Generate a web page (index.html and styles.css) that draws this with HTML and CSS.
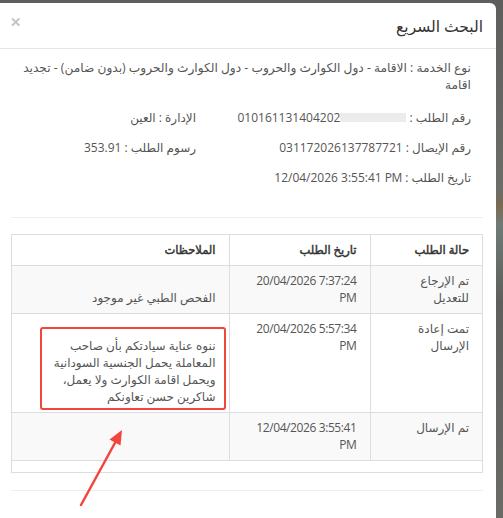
FILE: index.html
```html
<!DOCTYPE html>
<html lang="ar">

<head>
    <meta charset="UTF-8">
    <meta name="viewport" content="width=device-width, initial-scale=1.0">
    <title>البحث السريع</title>
    <link rel="stylesheet" href="styles.css">
</head>

<body>

    <div class="modal" dir="rtl">
        <div class="modal-header">
            <h4 class="modal-title">البحث السريع</h4>
            <span class="close">&times;</span>
        </div>

        <div class="modal-body">
            <!-- Request details -->
            <div class="info">
                <p class="service">نوع الخدمة : الاقامة - دول الكوارث والحروب - دول الكوارث والحروب (بدون ضامن) - تجديد<br>اقامة</p>
                <div class="info-grid">
                    <div>رقم الطلب : <span class="masked"></span><span class="num" dir="ltr">010161131404202</span></div>
                    <div>الإدارة : العين</div>
                    <div>رقم الإيصال : <span class="num" dir="ltr">031172026137787721</span></div>
                    <div>رسوم الطلب : <span class="num" dir="ltr">353.91</span></div>
                    <div>تاريخ الطلب : <span class="num" dir="ltr">12/04/2026 3:55:41 PM</span></div>
                </div>
            </div>

            <hr class="divider">

            <!-- Status history -->
            <div class="table-box">
                <table class="history">
                    <colgroup>
                        <col class="col-status">
                        <col class="col-date">
                        <col>
                    </colgroup>
                    <thead>
                        <tr>
                            <th>حالة الطلب</th>
                            <th>تاريخ الطلب</th>
                            <th>الملاحظات</th>
                        </tr>
                    </thead>
                    <tbody>
                        <tr class="striped">
                            <td>تم الإرجاع<br>للتعديل</td>
                            <td class="date" dir="ltr">20/04/2026 7:37:24<br>PM</td>
                            <td><br>الفحص الطبي غير موجود</td>
                        </tr>
                        <tr>
                            <td>تمت إعادة<br>الإرسال</td>
                            <td class="date" dir="ltr">20/04/2026 5:57:34<br>PM</td>
                            <td><br>ننوه عناية سيادتكم بأن صاحب<br>المعاملة يحمل الجنسية السودانية<br>ويحمل اقامة الكوارث ولا يعمل،<br>شاكرين حسن تعاونكم</td>
                        </tr>
                        <tr class="striped">
                            <td>تم الإرسال</td>
                            <td class="date" dir="ltr">12/04/2026 3:55:41<br>PM</td>
                            <td></td>
                        </tr>
                    </tbody>
                </table>
            </div>

            <hr class="divider bottom">
        </div>
    </div>

    <!-- Screenshot markup: red box and arrow -->
    <svg class="markup" width="503" height="518" viewBox="0 0 503 518">
        <rect x="41" y="328" width="184" height="81" rx="2" fill="none" stroke="#f2453d" stroke-width="2" />
        <line x1="81" y1="505" x2="116" y2="441" stroke="#f2453d" stroke-width="2.5" stroke-linecap="round" />
        <polygon points="122,430 109.5,439.5 120.5,445.5" fill="#f2453d" />
    </svg>

</body>

</html>
```

FILE: styles.css
```css
body {
    margin: 0;
    height: 518px;
    overflow: hidden;
    font-family: 'Open Sans', 'DejaVu Sans', sans-serif;
    font-size: 12px;
    color: #555;
    background: linear-gradient(to bottom, #5e5e5c 0, #6c6c69 190px, #7a6a52 205px, #6f7a76 225px, #5f605d 300px, #6a6a67 100%);
}

.modal {
    width: 496px;
    height: 515px;
    margin-top: 3px;
    background: #fff;
    border-top-right-radius: 6px;
}

.modal-header {
    display: flex;
    align-items: center;
    justify-content: space-between;
    height: 45px;
    padding: 0 13px 0 10px;
    border-bottom: 1px solid #e5e5e5;
}

.modal-title {
    margin: 0;
    font-size: 15.5px;
    font-weight: normal;
    color: #333;
}

.close {
    font-size: 20px;
    font-weight: bold;
    line-height: 1;
    color: #000;
    opacity: 0.22;
    margin-top: -8px;
}

.modal-body {
    padding: 0 13px 0 11px;
}

.info {
    padding: 10px 12px 0;
}

.service {
    margin: 0;
    font-size: 12.2px;
    line-height: 17px;
}

.info-grid {
    display: grid;
    grid-template-columns: 275px 1fr;
    line-height: 30px;
    margin-top: 10px;
}

/* latin numbers render narrower than the arabic text around them */
.num,
.date {
    letter-spacing: -0.4px;
}

.masked {
    display: inline-block;
    width: 66px;
    height: 9px;
    background: #ececec;
    filter: blur(0.6px);
}

.divider {
    border: 0;
    border-top: 1px solid #eee;
    margin: 24px 0 16px;
}

.divider.bottom {
    margin-top: 17px;
}

.table-box {
    border: 1px solid #ddd;
    padding-bottom: 11px;
}

.history {
    width: 100%;
    border-collapse: collapse;
    line-height: 17px;
}

.col-status {
    width: 112px;
}

.col-date {
    width: 141px;
}

.history th,
.history td {
    text-align: right;
    padding: 6px 13px 7px;
    border-bottom: 1px solid #ddd;
    border-left: 1px solid #ddd;
    vertical-align: top;
}

.history th:last-child,
.history td:last-child {
    border-left: 0;
}

.history th {
    font-size: 11.5px;
    font-weight: normal;
    color: #333;
    -webkit-text-stroke: 0.45px #333;
    padding: 6px 13px 7px;
    vertical-align: bottom;
}

.history .striped {
    background: #f9f9f9;
}

.markup {
    position: absolute;
    top: 0;
    left: 0;
    pointer-events: none;
}
```
